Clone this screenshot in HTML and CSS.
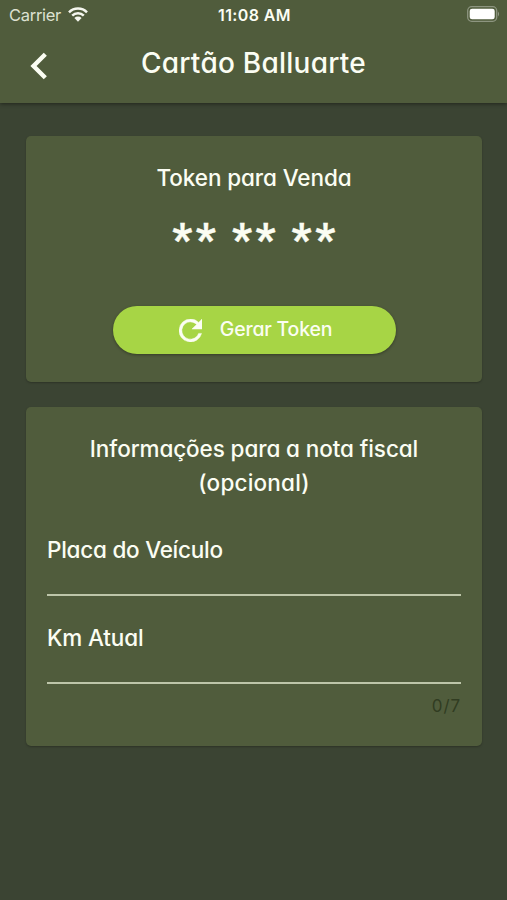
FILE: index.html
```html
<!DOCTYPE html>
<html lang="pt-BR">

<head>
    <meta charset="utf-8" />
    <title>Cartão Balluarte</title>
    <meta name="viewport" content="width=device-width, initial-scale=1">
    <link rel="stylesheet" href="styles.css">
</head>

<body>
    <header class="header">
        <div class="status-bar">
            <div class="carrier">
                <span>Carrier</span>
                <svg class="wifi" viewBox="0 0 20 15">
                    <path d="M1 5.3a12.7 12.7 0 0 1 18 0M4.2 8.6a8.2 8.2 0 0 1 11.6 0" fill="none" stroke="currentColor" stroke-width="2.5" />
                    <path d="M6.4 11a5.1 5.1 0 0 1 7.2 0L10 14.7z" fill="currentColor" />
                </svg>
            </div>
            <div class="time">11:08 AM</div>
            <svg class="battery" viewBox="0 0 33 16">
                <rect x=".7" y=".7" width="29" height="14.6" rx="4" fill="none" stroke="currentColor" stroke-opacity=".35" stroke-width="1.3" />
                <rect x="2.7" y="2.7" width="25" height="10.6" rx="2.4" fill="currentColor" />
                <path d="M31 5.5q2 2.5 0 5z" fill="currentColor" fill-opacity=".4" />
            </svg>
        </div>
        <div class="nav">
            <svg class="back" viewBox="0 0 18 28">
                <path d="M15.3 2.2L3.5 14l11.8 11.8" fill="none" stroke="currentColor" stroke-width="4.4" />
            </svg>
            <h1>Cartão Balluarte</h1>
        </div>
    </header>

    <main>
        <section class="card token-card">
            <h2 class="token-title">Token para Venda</h2>
            <div class="token">** ** **</div>
            <button class="btn-token" type="button">
                <svg class="refresh" viewBox="4 4 16 16">
                    <path d="M17.65 6.35A7.96 7.96 0 0 0 12 4a8 8 0 1 0 7.73 10h-2.08A6 6 0 1 1 12 6c1.66 0 3.14.69 4.22 1.78L13 11h7V4z" fill="currentColor" stroke="currentColor" stroke-width=".3" />
                </svg>
                <span>Gerar Token</span>
            </button>
        </section>

        <section class="card info-card">
            <h2 class="info-title">Informações para a nota fiscal<br><span class="optional">(opcional)</span></h2>
            <form>
                <label class="field placa">
                    <span>Placa do Veículo</span>
                    <input type="text" name="placa">
                </label>
                <label class="field km">
                    <span>Km Atual</span>
                    <input type="text" name="km" maxlength="7">
                </label>
                <div class="counter">0/7</div>
            </form>
        </section>
    </main>
</body>

</html>
```

FILE: styles.css
```css
* {
    box-sizing: border-box;
}

body {
    margin: 0;
    min-height: 900px;
    background-color: #3b4433;
    color: #fbfdf3;
    font-family: Inter, "Liberation Sans", sans-serif;
    /* single-storey a */
    font-feature-settings: "cv11";
}

svg {
    display: block;
}

h1,
h2 {
    margin: 0;
    font-weight: 500;
}

.header {
    height: 103px;
    background-color: #505c3c;
    box-shadow: 0 1px 4px rgba(0, 0, 0, 0.45);
}

.status-bar {
    display: grid;
    grid-template-columns: 1fr auto 1fr;
    align-items: center;
    height: 28px;
    padding: 0 7px 0 9px;
    font-size: 16.5px;
    font-feature-settings: normal;
}

.carrier {
    display: flex;
    align-items: center;
    gap: 7px;
    padding-top: 1px;
    color: #dde1d2;
    letter-spacing: -0.3px;
}

.wifi {
    width: 20px;
    height: 15px;
    color: #f5f7ef;
}

.time {
    padding-top: 1px;
    font-size: 16px;
    font-weight: 600;
    letter-spacing: 0.4px;
}

.battery {
    width: 33px;
    height: 16px;
    justify-self: end;
    color: #fff;
}

.nav {
    display: grid;
    grid-template-columns: 48px 1fr 48px;
    align-items: center;
    height: 74px;
    padding: 0 30px 4px;
}

.back {
    width: 18px;
    height: 28px;
    margin-top: 5px;
}

h1 {
    font-size: 28px;
    line-height: 36px;
    letter-spacing: 0.25px;
    text-align: center;
    white-space: nowrap;
}

main {
    padding: 33px 25px 0 26px;
}

.card {
    border-radius: 5px;
    background-color: #505c3c;
    box-shadow: 0 1px 2px rgba(0, 0, 0, 0.25);
}

.token-card {
    display: flex;
    flex-direction: column;
    align-items: center;
    height: 246px;
    padding-top: 25px;
}

h2 {
    font-size: 22.5px;
    line-height: 34px;
    letter-spacing: -0.1px;
    text-align: center;
    white-space: nowrap;
}

.token {
    height: 60px;
    margin-top: 15px;
    padding-left: 3px;
    font-family: Roboto, sans-serif;
    font-size: 44px;
    font-weight: 700;
    line-height: 60px;
    letter-spacing: 3.6px;
    word-spacing: -2px;
    -webkit-text-stroke: 0.4px currentColor;
}

.btn-token {
    display: flex;
    align-items: center;
    justify-content: center;
    gap: 18px;
    width: 283px;
    height: 48px;
    margin-top: 36px;
    padding: 0 0 2px 3px;
    border: none;
    border-radius: 24px;
    background-color: #a7d545;
    box-shadow: 0 1px 3px rgba(0, 0, 0, 0.35);
    color: #fbfdf3;
    font: inherit;
    font-size: 19.5px;
    font-weight: 500;
    font-feature-settings: inherit;
    letter-spacing: -0.2px;
}

.refresh {
    width: 23px;
    height: 23px;
    margin-top: 2px;
}

.info-card {
    height: 339px;
    margin-top: 25px;
    padding: 25px 21px 0;
}

.optional {
    letter-spacing: 0.2px;
}

.field {
    display: block;
    height: 88px;
    border-bottom: 2px solid #bdc5a9;
    font-size: 22.5px;
    font-weight: 500;
    line-height: 34px;
    letter-spacing: -0.25px;
}

.placa {
    height: 71px;
    margin-top: 25px;
    padding-top: 8px;
}

.km {
    padding-top: 25px;
    letter-spacing: -0.15px;
}

.field span,
.field input {
    display: block;
}

.field input {
    width: 100%;
    height: 24px;
    padding: 0;
    border: none;
    outline: none;
    background: none;
    color: inherit;
    font: inherit;
}

.counter {
    margin-top: 10px;
    color: #313c22;
    font-size: 17px;
    line-height: 24px;
    letter-spacing: 0.9px;
    text-align: right;
}
```
